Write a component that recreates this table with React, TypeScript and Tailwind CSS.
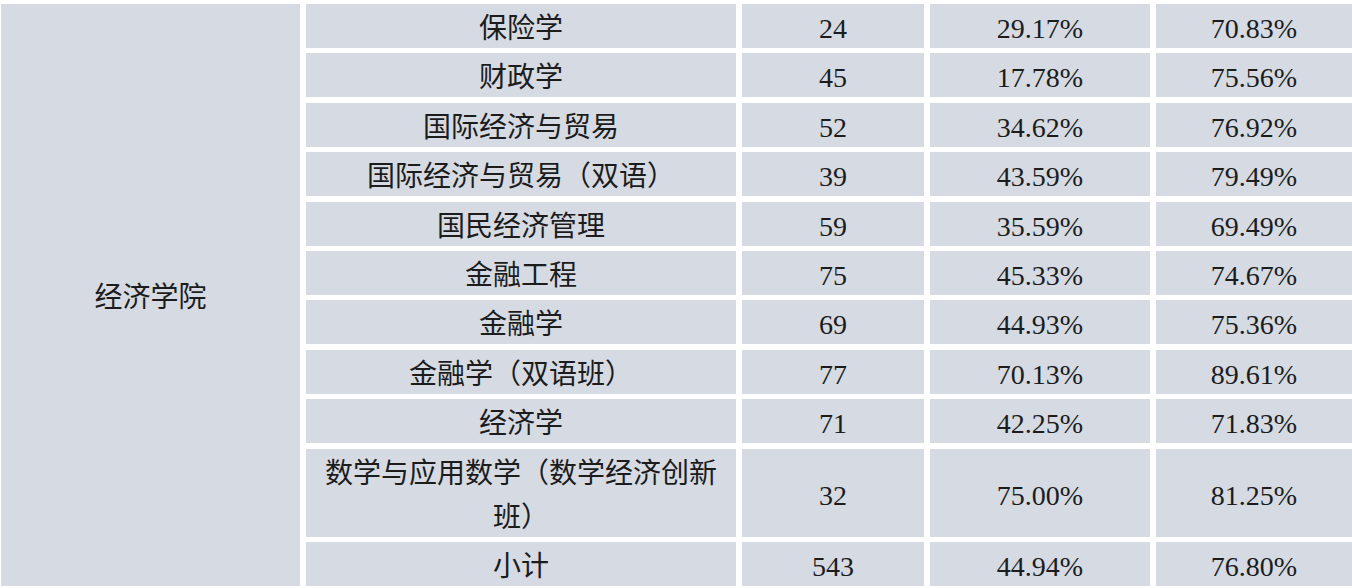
import React from "react";

const rows: [string, string, string, string][] = [
  ["保险学", "24", "29.17%", "70.83%"],
  ["财政学", "45", "17.78%", "75.56%"],
  ["国际经济与贸易", "52", "34.62%", "76.92%"],
  ["国际经济与贸易（双语）", "39", "43.59%", "79.49%"],
  ["国民经济管理", "59", "35.59%", "69.49%"],
  ["金融工程", "75", "45.33%", "74.67%"],
  ["金融学", "69", "44.93%", "75.36%"],
  ["金融学（双语班）", "77", "70.13%", "89.61%"],
  ["经济学", "71", "42.25%", "71.83%"],
  ["数学与应用数学（数学经济创新班）", "32", "75.00%", "81.25%"],
  ["小计", "543", "44.94%", "76.80%"],
];

const cell =
  "bg-[#d5dae3] flex items-center justify-center text-center leading-[44px] px-[10px] pt-[6px]";

export default function App() {
  return (
    <div
      className="w-[1352px] h-[588px] bg-white pt-[4px] pb-[2px] pl-[1px] overflow-hidden text-[28px] text-[#1c1c1c]"
      style={{ fontFamily: '"Liberation Serif", "Noto Sans CJK SC", serif' }}
    >
      <div className="grid grid-cols-[299px_430px_182px_220px_196px] grid-rows-[44px_44px_44px_44px_44px_44px_44px_44px_44px_88px_44px] gap-x-[6px] gap-y-[5.4px]">
        <div className={`${cell} row-span-11 col-start-1 row-start-1`}>经济学院</div>
        {rows.map((r, i) => (
          <React.Fragment key={i}>
            <div className={cell}>{r[0]}</div>
            <div className={cell}>{r[1]}</div>
            <div className={cell}>{r[2]}</div>
            <div className={cell}>{r[3]}</div>
          </React.Fragment>
        ))}
      </div>
    </div>
  );
}
